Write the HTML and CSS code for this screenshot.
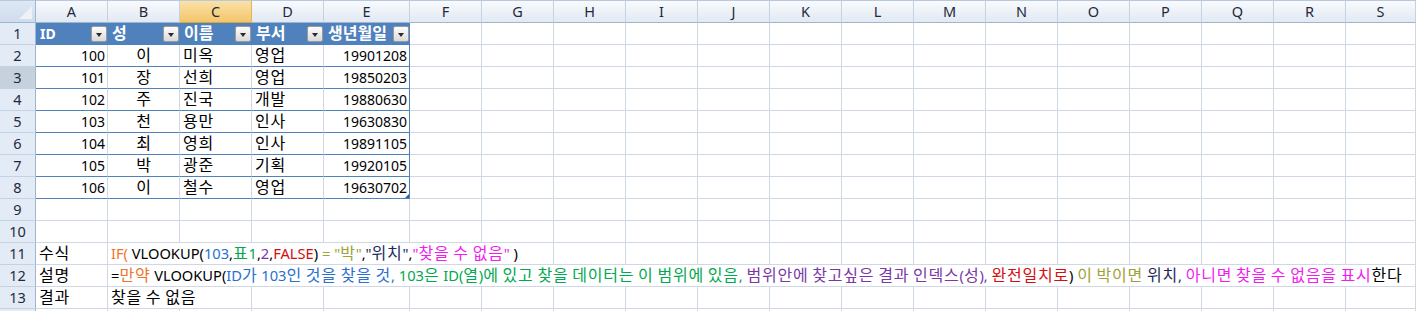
FILE: index.html
```html
<!DOCTYPE html>
<html lang="ko">
<head>
    <meta charset="UTF-8">
    <meta name="viewport" content="width=device-width, initial-scale=1.0">
    <title>VLOOKUP 예제</title>
    <link rel="stylesheet" href="styles.css">
</head>
<body>
    <div class="sheet" id="sheet"></div>

    <script>
        const letters = 'ABCDEFGHIJKLMNOPQRS'.split('');
        const sheet = document.getElementById('sheet');

        const table = [
            ['ID', '성', '이름', '부서', '생년월일'],
            ['100', '이', '미옥', '영업', '19901208'],
            ['101', '장', '선희', '영업', '19850203'],
            ['102', '주', '진국', '개발', '19880630'],
            ['103', '천', '용만', '인사', '19630830'],
            ['104', '최', '영희', '인사', '19891105'],
            ['105', '박', '광준', '기획', '19920105'],
            ['106', '이', '철수', '영업', '19630702']
        ];
        const align = ['num', 'mid', '', '', 'num'];

        // label in A, long text overflowing from B over several columns
        const notes = {
            11: ['수식', 6,
                '<span class="or">IF(</span> VLOOKUP(<span class="bl">103</span>,<span class="gr">표1</span>,<span class="pu">2</span>,<span class="rd">FALSE</span>) <span class="ol">= &quot;박&quot;</span>,<span class="nv">&quot;위치&quot;</span>,<span class="mg">&quot;찾을 수 없음&quot;</span> )'],
            12: ['설명', 18,
                '=<span class="or">만약</span> VLOOKUP(<span class="bl">ID가 103인 것을 찾을 것, </span><span class="gr">103은 ID(열)에 있고 찾을 데이터는 이 범위에 있음, </span><span class="pu">범위안에 찾고싶은 결과 인덱스(성), </span><span class="rd">완전일치로</span>) <span class="ol">이 박이면 </span><span class="nv">위치, </span><span class="mg">아니면 찾을 수 없음을 표시</span>한다'],
            13: ['결과', 2, '찾을 수 없음']
        };

        // hangul runs get their own size, the latin font is smaller than Excel's
        function korean(html) {
            return String(html).replace(/([가-힣]+)/g, '<span class="ko">$1</span>');
        }

        function cell(cls, html) {
            const div = document.createElement('div');
            div.className = cls;
            if (html !== undefined) div.innerHTML = korean(html);
            sheet.appendChild(div);
        }

        cell('corner');
        letters.forEach(l => cell('colhead' + (l === 'C' ? ' active' : ''), l));

        for (let r = 1; r <= 14; r++) {
            // row 14 is only a sliver at the bottom, its number is out of view
            cell('rowhead' + (r === 3 ? ' active' : ''), r < 14 ? r : '');
            let used = 0;

            if (r <= table.length) {
                table[r - 1].forEach((v, i) => {
                    let cls = r === 1 ? 'cell th' : 'cell tb ' + align[i];
                    if (i === 4) cls += ' tb-end';
                    if (r === table.length && i === 4) cls += ' handle';
                    cell(cls, r === 1 ? '<span>' + v + '</span><i class="dd"></i>' : v);
                });
                used = 5;
            } else if (notes[r]) {
                const [label, span, text] = notes[r];
                cell('cell', label);
                cell('cell over span-' + span, text);
                used = 1 + span;
            }

            for (let c = used; c < letters.length; c++) cell('cell');
        }
    </script>
</body>
</html>
```

FILE: styles.css
```css
html, body {
    margin: 0;
    overflow: hidden;
    background: #fff;
}

body {
    font-family: "Noto Sans", "Noto Sans CJK KR", sans-serif;
    font-size: 14px;
    color: #000;
}

.sheet {
    display: grid;
    grid-template-columns: 36px repeat(4, 72px) 86px repeat(13, 72px) 70px;
    grid-template-rows: 23px;
    grid-auto-rows: 22px;
    width: 1416px;
}

.sheet > div {
    box-sizing: border-box;
    white-space: nowrap;
}

.ko {
    font-size: 16px;
    letter-spacing: 0.78px;
}

/* headers */
.corner {
    position: relative;
    background: linear-gradient(#dfe8f4, #cfdcec);
    border-right: 1px solid #9eb6ce;
    border-bottom: 1px solid #9eb6ce;
    border-top: 1px solid #b9c9db;
}

.corner::after {
    content: "";
    position: absolute;
    right: 3px;
    bottom: 3px;
    border-left: 13px solid transparent;
    border-bottom: 13px solid #eef2f8;
}

.colhead {
    background: linear-gradient(#f8fafd, #e2e9f3);
    border-top: 1px solid #b9c9db;
    border-right: 1px solid #c4d2e2;
    border-bottom: 1px solid #9eb6ce;
    text-align: center;
    line-height: 21px;
    font-size: 14.5px;
    color: #1e2a3a;
}

.colhead.active {
    background: linear-gradient(#fae1a8, #f3c66a);
    border-right-color: #e2b557;
    border-bottom-color: #d6a443;
}

.rowhead {
    background: #e3ebf6;
    border-right: 1px solid #9eb6ce;
    border-bottom: 1px solid #c4d2e2;
    text-align: center;
    line-height: 21px;
    font-size: 14.5px;
    color: #1e2a3a;
}

.rowhead.active {
    background: #c6d1de;
}

/* cells */
.cell {
    border-right: 1px solid #d0d7e5;
    border-bottom: 1px solid #d0d7e5;
    padding: 0 2px 0 3px;
    line-height: 21px;
}

.cell.over {
    overflow: visible;
    font-size: 14.67px;
}

.span-2 { grid-column: span 2; }
.span-6 { grid-column: span 6; }
.span-18 { grid-column: span 18; }

.num { text-align: right; }
.mid { text-align: center; }

/* table */
.th {
    display: flex;
    align-items: center;
    justify-content: space-between;
    background: #4f81bd;
    border-right-color: #4f81bd;
    border-bottom-color: #4f81bd;
    padding: 0 0 0 4px;
    color: #fff;
    font-weight: bold;
}

.th .ko {
    letter-spacing: 0;
}

.dd {
    position: relative;
    width: 16px;
    height: 16px;
    box-sizing: border-box;
    border: 1px solid #9a9a9a;
    border-radius: 2px;
    background: linear-gradient(#fdfdfd, #d9d9d9);
}

.dd::after {
    content: "";
    position: absolute;
    left: 4px;
    top: 6px;
    border-left: 3px solid transparent;
    border-right: 3px solid transparent;
    border-top: 4px solid #2b2b2b;
}

.tb {
    border-bottom-color: #4f81bd;
}

.tb-end {
    border-right-color: #4f81bd;
}

.handle {
    position: relative;
}

.handle::after {
    content: "";
    position: absolute;
    right: 0;
    bottom: 0;
    border-left: 4px solid transparent;
    border-bottom: 4px solid #2f5f9e;
}

/* formula colours */
.or { color: #f0742c; }
.bl { color: #2a6fcf; }
.gr { color: #00a84f; }
.pu { color: #7a38a6; }
.rd { color: #d40d12; }
.ol { color: #9ea238; }
.nv { color: #1b2a5c; }
.mg { color: #f01cf0; }
```
